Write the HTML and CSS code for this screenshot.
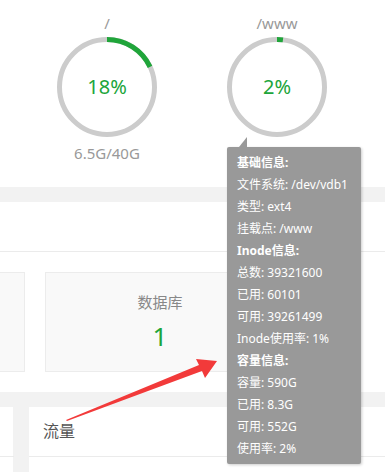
FILE: index.html
```html
<!DOCTYPE html>
<html lang="zh-CN">
<head>
  <meta charset="UTF-8" />
  <meta name="viewport" content="width=device-width, initial-scale=1.0"/>
  <title>磁盘</title>
  <link rel="stylesheet" href="styles.css">
</head>
<body>
  <div class="disk-row">
    <div class="disk">
      <div class="disk-name">/</div>
      <div class="ring">
        <svg width="100" height="100" viewBox="0 0 100 100">
          <circle cx="50" cy="50" r="47.5" class="ring-bg" />
          <circle cx="50" cy="50" r="47.5" class="ring-val" stroke-dasharray="53.7 300" />
        </svg>
        <span class="ring-text">18%</span>
      </div>
      <div class="disk-size">6.5G/40G</div>
    </div>
    <div class="disk">
      <div class="disk-name">/www</div>
      <div class="ring">
        <svg width="100" height="100" viewBox="0 0 100 100">
          <circle cx="50" cy="50" r="47.5" class="ring-bg" />
          <circle cx="50" cy="50" r="47.5" class="ring-val" stroke-dasharray="6 300" />
        </svg>
        <span class="ring-text">2%</span>
      </div>
      <div class="disk-size"></div>
    </div>
  </div>

  <div class="faixa"></div>

  <div class="painel">
    <div class="painel-titulo"></div>
    <div class="cards">
      <div class="card card-cortado"></div>
      <div class="card">
        <div class="card-nome">数据库</div>
        <div class="card-num">1</div>
      </div>
    </div>
  </div>

  <div class="faixa"></div>

  <div class="rodape">
    <div class="bloco bloco-esq">
      <div class="bloco-titulo"></div>
    </div>
    <div class="bloco bloco-dir">
      <div class="bloco-titulo">流量</div>
    </div>
  </div>

  <div class="tips">
    <div class="tips-seta"></div>
    <b>基础信息:</b><br>
    文件系统: /dev/vdb1<br>
    类型: ext4<br>
    挂载点: /www<br>
    <b>Inode信息:</b><br>
    总数: 39321600<br>
    已用: 60101<br>
    可用: 39261499<br>
    Inode使用率: 1%<br>
    <b>容量信息:</b><br>
    容量: 590G<br>
    已用: 8.3G<br>
    可用: 552G<br>
    使用率: 2%
  </div>

  <!-- seta vermelha de anotação -->
  <svg class="anotacao" width="385" height="472" viewBox="0 0 385 472">
    <polygon points="66,420 199,365 196,359 217,361 205,378 202,371 67,421" fill="#f23a3a" />
  </svg>
</body>
</html>
```

FILE: styles.css
```css
* {
  box-sizing: border-box;
  margin: 0;
  padding: 0;
}

body {
  font-family: "Noto Sans", "Noto Sans CJK SC", sans-serif;
  background: #fff;
  width: 385px;
  height: 472px;
  overflow: hidden;
  position: relative;
}

.disk-row {
  display: flex;
  height: 187px;
  padding: 13px 0 0 22px;
}

.disk {
  width: 170px;
  display: flex;
  flex-direction: column;
  align-items: center;
}

.disk-name {
  height: 20px;
  line-height: 20px;
  font-size: 15px;
  color: #999;
  margin-bottom: 4px;
}

.ring {
  position: relative;
  width: 100px;
  height: 100px;
}

.ring svg {
  display: block;
  transform: rotate(-90deg);
}

.ring-bg {
  fill: none;
  stroke: #cccccc;
  stroke-width: 5;
}

.ring-val {
  fill: none;
  stroke: #20a53a;
  stroke-width: 5;
}

.ring-text {
  position: absolute;
  top: 0;
  left: 0;
  width: 100%;
  line-height: 100px;
  text-align: center;
  font-size: 20px;
  color: #20a53a;
}

.disk-size {
  margin-top: 6px;
  height: 20px;
  line-height: 20px;
  font-size: 15px;
  color: #999;
}

.faixa {
  height: 15px;
  background: #f2f2f2;
}

.painel-titulo {
  height: 50px;
  border-bottom: 1px solid #ebebeb;
}

.cards {
  display: flex;
  gap: 20px;
  padding: 20px 0;
  margin-left: -205px;
}

.card {
  width: 230px;
  height: 100px;
  background: #f9f9f9;
  border: 1px solid #ececec;
  text-align: center;
}

.card-nome {
  margin-top: 18px;
  font-size: 15px;
  line-height: 22px;
  color: #888;
}

.card-num {
  margin-top: 6px;
  font-size: 26px;
  line-height: 34px;
  color: #20a53a;
}

.rodape {
  display: flex;
  gap: 16px;
  background: #f2f2f2;
  height: 65px;
}

.bloco {
  background: #fff;
}

.bloco-esq {
  width: 13px;
}

.bloco-dir {
  flex: 1;
}

.bloco-titulo {
  height: 50px;
  line-height: 49px;
  padding-left: 14px;
  border-bottom: 1px solid #ebebeb;
  font-size: 16px;
  color: #555;
}

.tips {
  position: absolute;
  left: 227px;
  top: 147px;
  width: 134px;
  padding: 5px 10px 4px;
  background: #999;
  color: #fff;
  font-size: 12px;
  line-height: 22px;
  white-space: nowrap;
  box-shadow: 1px 1px 3px rgba(0, 0, 0, 0.2);
  border-radius: 2px;
}

.tips-seta {
  position: absolute;
  left: 12px;
  top: -10px;
  width: 0;
  height: 0;
  border-bottom: 10px solid #999;
  border-left: 8px solid transparent;
}

.anotacao {
  position: absolute;
  left: 0;
  top: 0;
  pointer-events: none;
}
```
